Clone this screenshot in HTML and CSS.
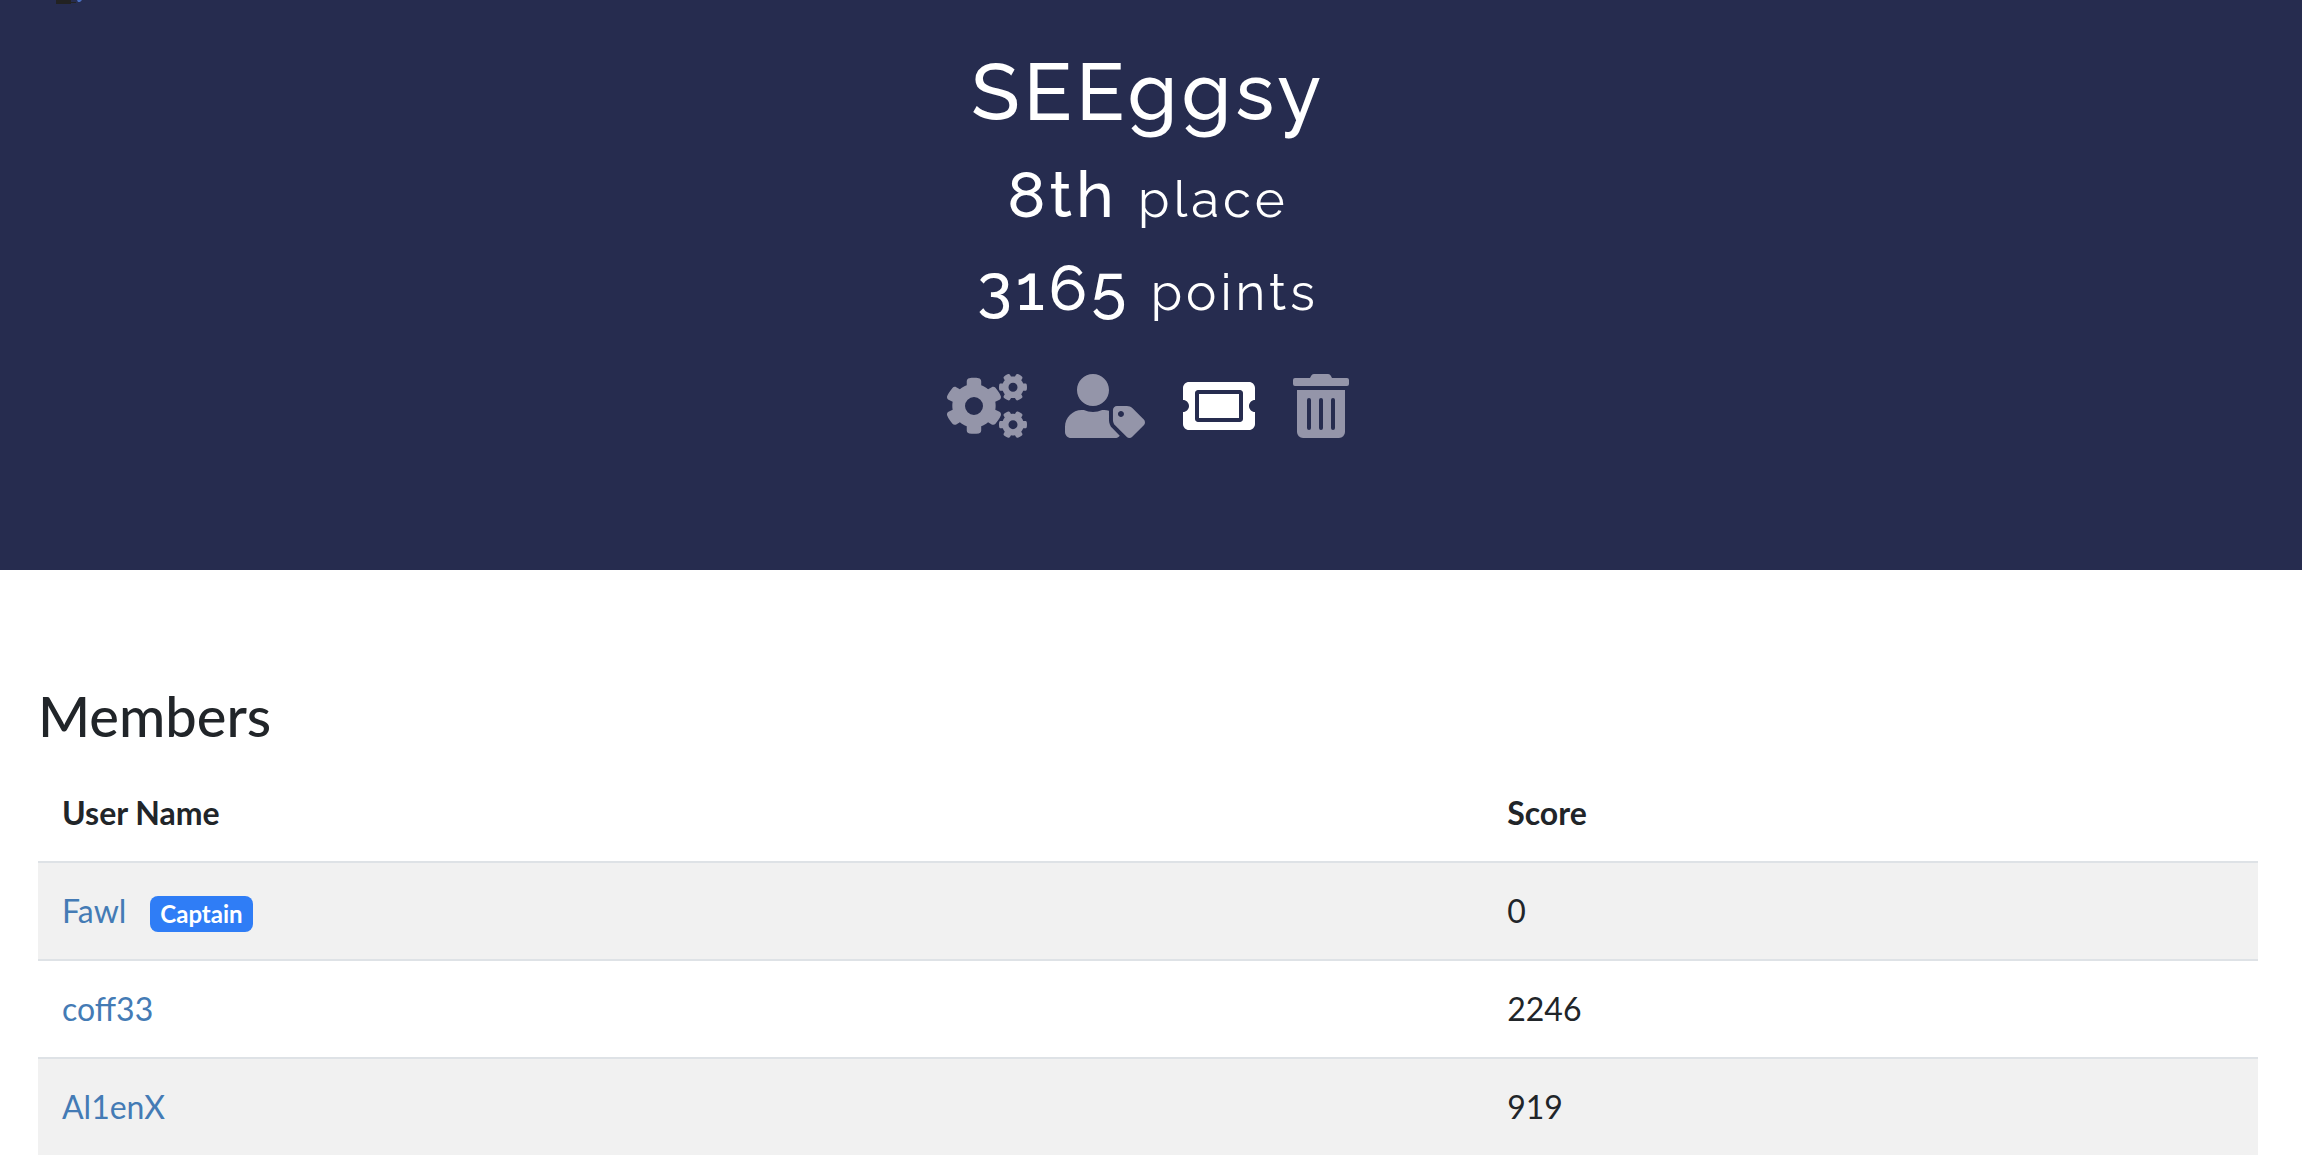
FILE: index.html
```html
<!DOCTYPE html>
<html lang="en">
<head>
<meta charset="utf-8">
<meta name="viewport" content="width=device-width, initial-scale=1">
<title>SEEggsy</title>
<link rel="stylesheet" href="styles.css">
</head>
<body>
<header class="hero">
  <svg class="brand" viewBox="0 0 28 4" aria-hidden="true"><path fill="#222" d="M0 0h15v2h5v1h-5v1H0z"/><path fill="#4a6fc0" d="M21 0h5l-2 2h-2z"/></svg>
  <h1 class="team-name">SEEggsy</h1>
  <h2 class="stat">8th <small>place</small></h2>
  <h2 class="stat">3165 <small>points</small></h2>
  <div class="actions">
    <button class="action" type="button" aria-label="Edit team">
      <svg class="icon" viewBox="0 0 640 512"><path fill-rule="evenodd" d="M512.1 191l-8.2 14.3c-3 5.3-9.4 7.5-15.1 5.4-11.8-4.4-22.6-10.7-32.1-18.6-4.6-3.8-5.8-10.5-2.8-15.7l8.2-14.3c-6.9-8-12.3-17.3-15.9-27.4h-16.5c-6 0-11.2-4.3-12.2-10.3-2-12-2.1-24.6 0-37.1 1-6 6.2-10.4 12.2-10.4h16.5c3.6-10.1 9-19.4 15.9-27.4l-8.2-14.3c-3-5.2-1.9-11.9 2.8-15.7 9.5-7.9 20.4-14.2 32.1-18.6 5.7-2.1 12.1.1 15.1 5.4l8.2 14.3c10.5-1.9 21.2-1.9 31.7 0L552 6.3c3-5.3 9.4-7.5 15.1-5.4 11.8 4.4 22.6 10.7 32.1 18.6 4.6 3.8 5.8 10.5 2.8 15.7l-8.2 14.3c6.9 8 12.3 17.3 15.9 27.4h16.5c6 0 11.2 4.3 12.2 10.3 2 12 2.1 24.6 0 37.1-1 6-6.2 10.4-12.2 10.4h-16.5c-3.6 10.1-9 19.4-15.9 27.4l8.2 14.3c3 5.2 1.9 11.9-2.8 15.7-9.5 7.9-20.4 14.2-32.1 18.6-5.7 2.1-12.1-.1-15.1-5.4l-8.2-14.3c-10.4 1.9-21.2 1.9-31.7 0zM492 106a36 36 0 1 0 72 0a36 36 0 1 0-72 0z"/><path fill-rule="evenodd" transform="translate(0 299)" d="M512.1 191l-8.2 14.3c-3 5.3-9.4 7.5-15.1 5.4-11.8-4.4-22.6-10.7-32.1-18.6-4.6-3.8-5.8-10.5-2.8-15.7l8.2-14.3c-6.9-8-12.3-17.3-15.9-27.4h-16.5c-6 0-11.2-4.3-12.2-10.3-2-12-2.1-24.6 0-37.1 1-6 6.2-10.4 12.2-10.4h16.5c3.6-10.1 9-19.4 15.9-27.4l-8.2-14.3c-3-5.2-1.9-11.9 2.8-15.7 9.5-7.9 20.4-14.2 32.1-18.6 5.7-2.1 12.1.1 15.1 5.4l8.2 14.3c10.5-1.9 21.2-1.9 31.7 0L552 6.3c3-5.3 9.4-7.5 15.1-5.4 11.8 4.4 22.6 10.7 32.1 18.6 4.6 3.8 5.8 10.5 2.8 15.7l-8.2 14.3c6.9 8 12.3 17.3 15.9 27.4h16.5c6 0 11.2 4.3 12.2 10.3 2 12 2.1 24.6 0 37.1-1 6-6.2 10.4-12.2 10.4h-16.5c-3.6 10.1-9 19.4-15.9 27.4l8.2 14.3c3 5.2 1.9 11.9-2.8 15.7-9.5 7.9-20.4 14.2-32.1 18.6-5.7 2.1-12.1-.1-15.1-5.4l-8.2-14.3c-10.4 1.9-21.2 1.9-31.7 0zM492 106a36 36 0 1 0 72 0a36 36 0 1 0-72 0z"/><path fill-rule="evenodd" d="M386.3 286.1l33.7 16.8c10.1 5.8 14.5 18.1 10.5 29.1-8.9 24.2-26.4 46.4-42.6 65.8-7.4 8.9-20.2 11.1-30.3 5.3l-29.1-16.8c-16 13.7-34.6 24.6-54.9 31.7v33.6c0 11.6-8.3 21.6-19.7 23.6-24.6 4.2-50.4 4.4-75.9 0-11.5-2-20-11.9-20-23.6V418c-20.3-7.2-38.9-18-54.9-31.7L74 403c-10 5.8-22.9 3.6-30.3-5.3-16.2-19.4-33.3-41.6-42.2-65.7-4-10.9.4-23.2 10.5-29.1l33.3-16.8c-3.9-20.9-3.9-42.4 0-63.4L12 205.8c-10.1-5.8-14.6-18.1-10.5-29 8.9-24.2 26-46.4 42.2-65.8 7.4-8.9 20.2-11.1 30.3-5.3l29.1 16.8c16-13.7 34.6-24.6 54.9-31.7V57.1c0-11.5 8.2-21.5 19.6-23.5 24.6-4.2 50.5-4.4 76-.1 11.5 2 20 11.9 20 23.6v33.6c20.3 7.2 38.9 18 54.9 31.7l29.1-16.8c10-5.8 22.9-3.6 30.3 5.3 16.2 19.4 33.2 41.6 42.1 65.8 4 10.9.1 23.2-10 29.1l-33.7 16.8c3.9 21 3.9 42.5 0 63.5zM144 256a72 72 0 1 0 144 0a72 72 0 1 0-144 0z"/></svg>
    </button>
    <button class="action" type="button" aria-label="Choose captain">
      <svg class="icon" viewBox="0 0 640 512"><path d="M630.6 364.9l-90.3-90.2c-12-12-28.3-18.7-45.3-18.7h-79.3c-17.7 0-32 14.3-32 32v79.2c0 17 6.7 33.2 18.7 45.2l90.3 90.2c12.5 12.5 32.8 12.5 45.3 0l92.5-92.5c12.6-12.5 12.6-32.7.1-45.2zm-182.8-21c-13.3 0-24-10.7-24-24s10.7-24 24-24 24 10.7 24 24c0 13.2-10.7 24-24 24zm-223.8-88c70.7 0 128-57.3 128-128C352 57.3 294.7 0 224 0S96 57.3 96 128c0 70.6 57.3 127.9 128 127.9zm127.8 111.2V294c-12.2-3.6-24.9-6.2-38.2-6.2h-16.7c-22.2 10.2-46.9 16-72.9 16s-50.6-5.8-72.9-16h-16.7C60.2 287.9 0 348.1 0 422.3v41.6c0 26.5 21.5 48 48 48h352c15.5 0 29.2-7.5 38-18.9l-58.1-58.2c-18.1-18.1-28.1-42.2-28.1-67.7z"/></svg>
    </button>
    <button class="action action-active" type="button" aria-label="Invite members">
      <svg class="icon" viewBox="0 0 576 512"><path d="M128 160h320v192H128V160zm400 96c0 26.51 21.49 48 48 48v96c0 26.51-21.49 48-48 48H48c-26.51 0-48-21.49-48-48v-96c26.51 0 48-21.49 48-48s-21.49-48-48-48v-96c0-26.51 21.49-48 48-48h480c26.51 0 48 21.49 48 48v96c-26.51 0-48 21.49-48 48zm-48-104c0-13.255-10.745-24-24-24H120c-13.255 0-24 10.745-24 24v208c0 13.255 10.745 24 24 24h336c13.255 0 24-10.745 24-24V152z"/></svg>
    </button>
    <button class="action" type="button" aria-label="Disband team">
      <svg class="icon" viewBox="0 0 448 512"><path d="M32 464a48 48 0 0 0 48 48h288a48 48 0 0 0 48-48V128H32zm272-256a16 16 0 0 1 32 0v224a16 16 0 0 1-32 0zm-96 0a16 16 0 0 1 32 0v224a16 16 0 0 1-32 0zm-96 0a16 16 0 0 1 32 0v224a16 16 0 0 1-32 0zM432 32H312l-9.4-18.7A24 24 0 0 0 281.1 0H166.8a23.72 23.72 0 0 0-21.4 13.3L136 32H16A16 16 0 0 0 0 48v32a16 16 0 0 0 16 16h416a16 16 0 0 0 16-16V48a16 16 0 0 0-16-16z"/></svg>
    </button>
  </div>
</header>
<main class="content">
  <h3 class="section-title" id="members">Members</h3>
  <table class="members" aria-labelledby="members">
    <thead>
      <tr><th class="col-name" scope="col">User Name</th><th scope="col">Score</th></tr>
    </thead>
    <tbody>
      <tr><td><a href="#fawl">Fawl</a><span class="badge">Captain</span></td><td>0</td></tr>
      <tr><td><a href="#coff33">coff33</a></td><td>2246</td></tr>
      <tr><td><a href="#al1enx">Al1enX</a></td><td>919</td></tr>
    </tbody>
  </table>
</main>
</body>
</html>
```
FILE: styles.css
```css
* {
  box-sizing: border-box;
}

body {
  margin: 0;
  background: #fff;
  color: #212529;
  font-family: Lato, sans-serif;
  font-size: 32px;
  line-height: 48px;
}

.hero {
  position: relative;
  padding: 44px 44px 132px 38px;
  background: #262c4f;
  color: #fff;
  text-align: center;
}

.brand {
  position: absolute;
  top: 0;
  left: 56px;
  width: 28px;
  height: 4px;
}

.team-name,
.stat {
  margin: 0 0 16px;
  font-family: Raleway, Lato, sans-serif;
  font-weight: 500;
  letter-spacing: 4px;
}

.team-name {
  font-size: 80px;
  line-height: 96px;
}

.stat {
  font-size: 64px;
  line-height: 77px;
}

.stat small {
  font-size: 51px;
  font-weight: 400;
  line-height: 51px;
}

.actions {
  display: flex;
  justify-content: center;
  gap: 38px;
  padding-top: 32px;
}

.action {
  display: block;
  padding: 0;
  border: 0;
  background: none;
  color: #9495a9;
  cursor: pointer;
}

.action-active {
  color: #fff;
}

.icon {
  display: block;
  height: 64px;
  fill: currentColor;
}

.content {
  padding: 112px 44px 0 38px;
}

.section-title {
  margin: 0 0 16px;
  font-size: 56px;
  font-weight: 500;
  line-height: 67px;
}

.members {
  width: 100%;
  border-collapse: separate;
  border-spacing: 0;
  text-align: left;
}

.members th,
.members td {
  padding: 24px;
}

.members td {
  border-top: 2px solid #dee2e6;
}

.members tbody tr:nth-child(odd) {
  background: #f1f1f1;
}

.col-name {
  width: 65.1%;
}

.members a {
  color: #447bb5;
  text-decoration: none;
}

.badge {
  display: inline-block;
  margin-left: 24px;
  padding: 6px 10px;
  border-radius: 8px;
  background: #2f7df6;
  color: #fff;
  font-size: 24px;
  font-weight: 700;
  line-height: 24px;
}
```
